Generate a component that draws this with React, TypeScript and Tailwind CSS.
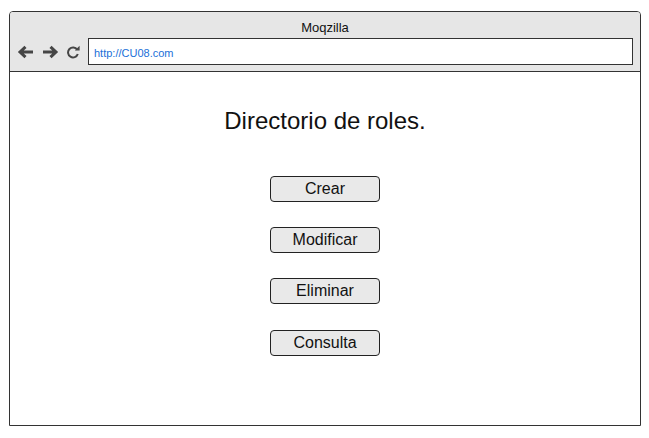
const buttons = ['Crear', 'Modificar', 'Eliminar', 'Consulta'];

function ArrowLeft() {
  return (
    <svg width="17" height="14" viewBox="0 0 17 14" className="block">
      <path d="M16 7H3.5M8.5 1.8L3 7l5.5 5.2" fill="none" stroke="#464646" strokeWidth="3" />
    </svg>
  );
}

function ArrowRight() {
  return (
    <svg width="17" height="14" viewBox="0 0 17 14" className="block">
      <path d="M1 7h12.5M8.5 1.8L14 7l-5.5 5.2" fill="none" stroke="#464646" strokeWidth="3" />
    </svg>
  );
}

function Reload() {
  return (
    <svg width="15" height="14" viewBox="0 0 15 14" className="block">
      <path d="M11.2 4.6A5 5 0 1 0 11.8 9" fill="none" stroke="#464646" strokeWidth="2" />
      <path d="M8.8 5.6h4.8V0.8z" fill="#464646" />
    </svg>
  );
}

export default function App() {
  return (
    <div className="w-[649px] h-[438px] bg-white pt-[11px] pl-[9px]" style={{ fontFamily: '"Liberation Sans", Arial, sans-serif' }}>
      <div className="w-[632px] h-[415px] border border-[#333] rounded-t-[4px] flex flex-col overflow-hidden">
        <div className="h-[60px] bg-[#e6e6e6] border-b border-[#333] flex flex-col">
          <div className="pt-[8px] text-center text-[13px] leading-[15px] text-[#111]">Moqzilla</div>
          <div className="mt-[3px] flex items-center">
            <div className="ml-[7px] w-[17px]"><ArrowLeft /></div>
            <div className="ml-[8px] w-[17px]"><ArrowRight /></div>
            <div className="ml-[7px] w-[15px]"><Reload /></div>
            <div className="ml-[7px] mr-[7px] flex-1 h-[27px] bg-white border border-[#333] flex items-center pl-[5px] pt-[3px] text-[11px] text-[#1a6fd8]">
              http://CU08.com
            </div>
          </div>
        </div>
        <div className="flex-1 flex flex-col items-center">
          <h1 className="mt-[35px] text-[24px] leading-[28px] text-[#111]">Directorio de roles.</h1>
          <div className="mt-[41px] flex flex-col">
            {buttons.map((b, i) => (
              <div
                key={b}
                className={`w-[110px] h-[26px] rounded-[4px] border border-[#222] bg-[#e9e9e9] flex items-center justify-center text-[16px] text-[#111] ${
                  i === 0 ? '' : i === 3 ? 'mt-[26px]' : 'mt-[25px]'
                }`}
              >
                {b}
              </div>
            ))}
          </div>
        </div>
      </div>
    </div>
  );
}
